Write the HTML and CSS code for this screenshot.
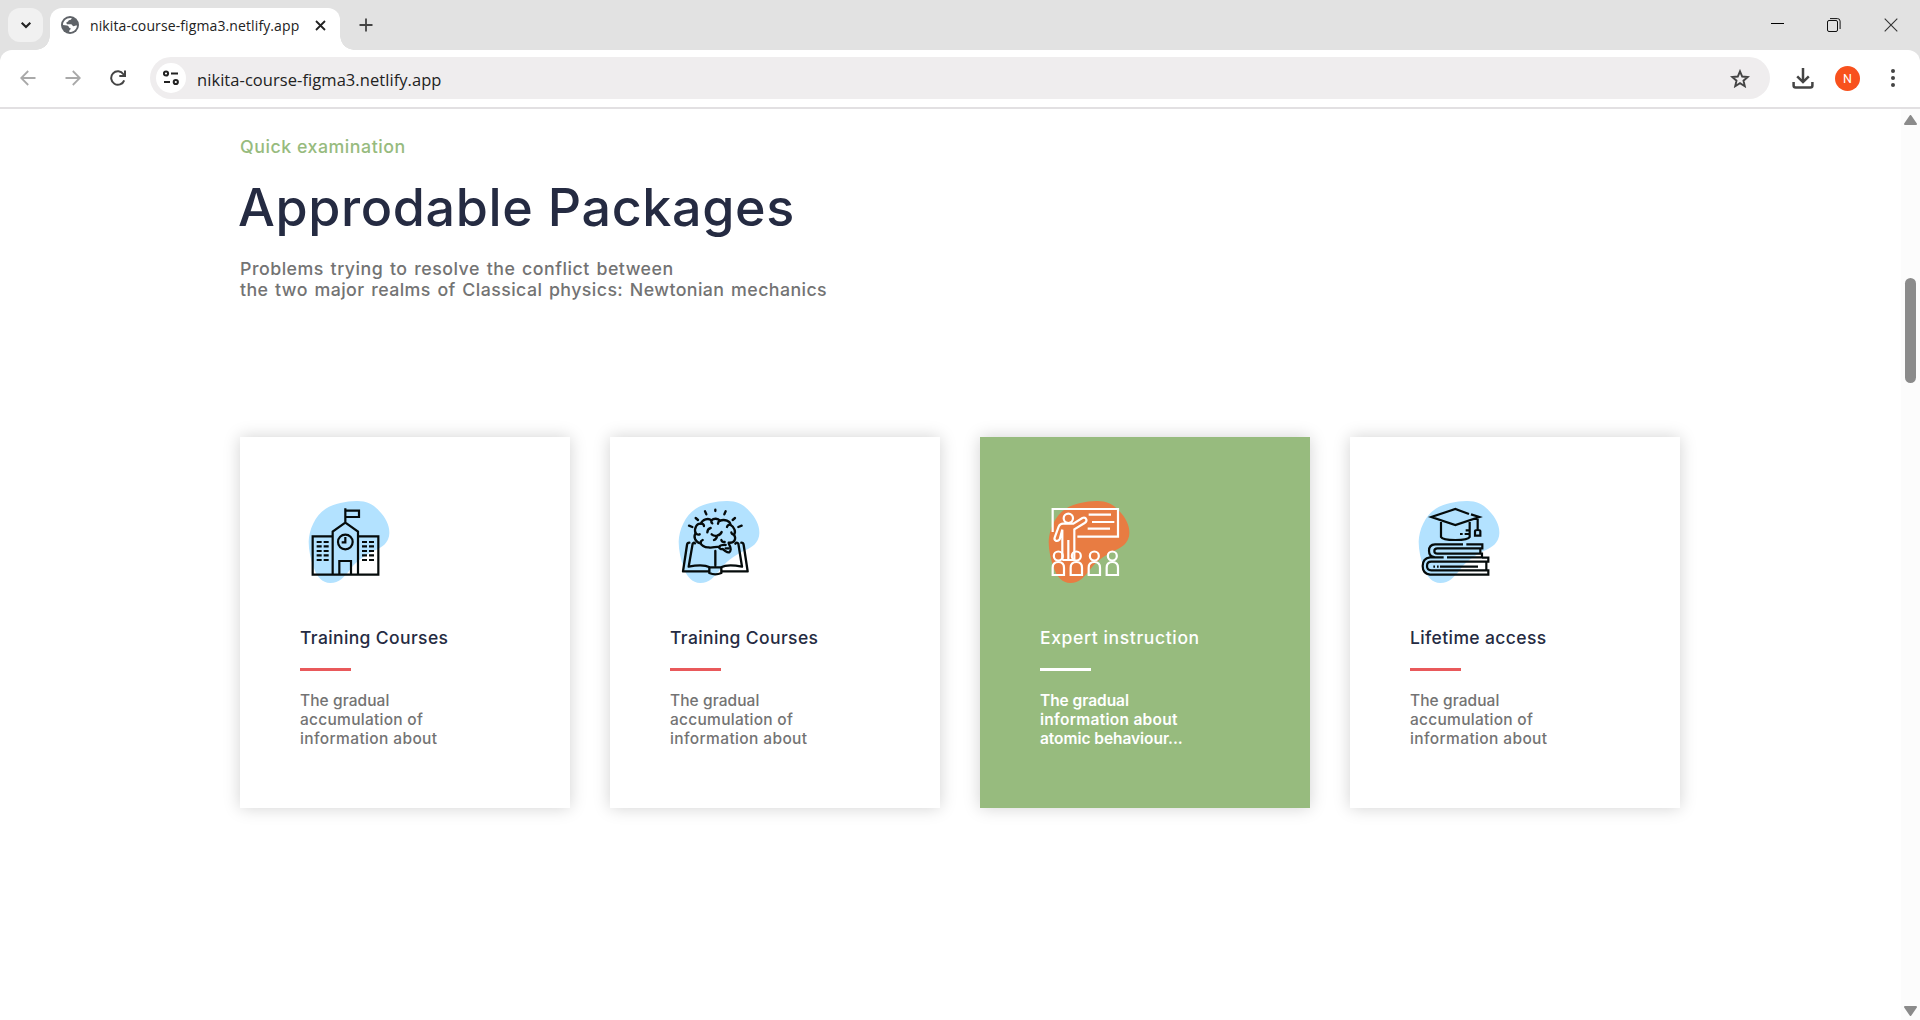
FILE: index.html
```
<!DOCTYPE html>
<html lang="en">
<head>
<meta charset="utf-8">
<title>nikita-course-figma3.netlify.app</title>
<link rel="stylesheet" href="styles.css">
</head>
<body>
<header class="browser">
  <div class="tabstrip">
    <div class="tab-search"><svg width="12" height="8" viewBox="0 0 12 8"><path d="M1.7 1.7 6 6l4.3-4.3" fill="none" stroke="#222" stroke-width="2.1"/></svg></div>
    <div class="tab">
      <svg class="globe" width="18" height="18" viewBox="0 0 18 18"><circle cx="9" cy="9" r="9" fill="#5f6368"/><path d="M10.7 2.1C10.4 3.8 9.500 4.200 7.800 4.300 7.300 5.400 6.800 6 5.400 6.200 5.500 7.600 5.600 8.300 6.800 8.300H9.800C11.500 8.300 11.200 10 12.400 10.200 13.600 10.300 14.600 9.300 16 9.500 15.600 13.500 12.500 16.200 8.300 16 8.200 15 8.300 14.200 9 13.800 10.200 13.200 9.800 11.700 8.200 11.700 7.600 10.500 7.400 9.800 6 9.600L2 9C2 5 5.500 1.500 10.700 2.100Z" fill="#fff"/></svg>
      <span class="tab-title">nikita-course-figma3.netlify.app</span>
      <svg width="11" height="11" viewBox="0 0 11 11"><path d="m1 1 9 9M10 1l-9 9" stroke="#222" stroke-width="1.800"/></svg>
    </div>
    <svg class="new-tab" width="14" height="14" viewBox="0 0 14 14"><path d="M7 .5v13M.5 7h13" stroke="#444" stroke-width="1.800"/></svg>
    <div class="window-controls">
      <svg width="13" height="13" viewBox="0 0 13 13"><path d="M0 5.500h13" stroke="#000"/></svg>
      <svg width="14" height="14" viewBox="0 0 14 14" fill="none" stroke="#111"><rect x=".5" y="2.500" width="10" height="11" rx="1.500"/><path d="M3 .6h7.500q2.600 0 2.600 2.600V11"/></svg>
      <svg width="14" height="14" viewBox="0 0 14 14"><path d="m.7.700 12.600 12.600M13.300.7.700 13.300" stroke="#333" stroke-width="1.100"/></svg>
    </div>
  </div>
  <div class="toolbar">
    <nav class="nav-buttons">
      <svg width="16" height="16" viewBox="0 0 16 16" fill="none" stroke="#a9a9a9" stroke-width="1.800"><path d="M15.500 8H1.700M8.200 1 1.200 8l7 7"/></svg>
      <svg width="16" height="16" viewBox="0 0 16 16" fill="none" stroke="#a9a9a9" stroke-width="1.800"><path d="M.5 8h13.800M7.800 1l7 7-7 7"/></svg>
      <svg width="16" height="16" viewBox="0 0 16 16" fill="none" stroke="#444" stroke-width="2"><path d="M14.200 10.300A6.700 6.700 0 1 1 13.400 4.200L15 6M15 .5V6H9.300"/></svg>
    </nav>
    <div class="omnibox">
      <span class="site-info"><svg width="16" height="16" viewBox="0 0 16 16" fill="none" stroke="#222" stroke-width="2"><circle cx="3" cy="3.500" r="2.100"/><path d="M8 3.500h7M1 12h6"/><circle cx="12.800" cy="12" r="2.100"/></svg></span>
      <span class="url">nikita-course-figma3.netlify.app</span>
      <svg class="star" width="20" height="19" viewBox="0 0 20 19"><path d="m10 2.300 2.200 5.200 5.600.500-4.300 3.700 1.300 5.500-4.800-3-4.800 3 1.300-5.500L2.200 8l5.600-.5Z" fill="none" stroke="#444" stroke-width="1.900"/></svg>
    </div>
    <svg class="download" width="22" height="21" viewBox="0 0 22 21" fill="none" stroke="#444" stroke-width="2.500"><path d="M11 0v13.500M5.200 8.300l5.800 5.800 5.800-5.800M1.600 14v3.500q0 2 2 2h14.800q2 0 2-2V14"/></svg>
    <span class="avatar">N</span>
    <svg class="menu" width="4" height="18" viewBox="0 0 4 18" fill="#444"><circle cx="2" cy="2" r="2"/><circle cx="2" cy="9" r="2"/><circle cx="2" cy="16" r="2"/></svg>
  </div>
</header>

<svg class="defs" width="0" height="0"><defs>
  <path id="blob" d="M200 63C228 62 250 72 268 92 288 112 300 136 299 160 298 182 286 197 265 207 235 220 205 238 183 266 165 290 148 309 122 309 98 309 80 290 72 262 63 238 57 210 57 185 58 150 75 108 108 86 135 70 168 64 200 63Z"/>
  <g id="person"><circle cx="86" cy="228" r="13.500"/><path d="M69 285v-22q0-17 17-17t17 17v22Z"/></g>
</defs></svg>

<div class="viewport">
  <main class="packages">
    <p class="eyebrow">Quick examination</p>
    <h1>Approdable Packages</h1>
    <p class="lead"><span class="lead-first">Problems trying to resolve the conflict between</span><br><span class="lead-second">the two major realms of Classical physics: Newtonian mechanics</span></p>
    <section class="cards">
      <article class="card">
        <svg class="card-icon" viewBox="31 51 300 270"><use href="#blob" class="blob"/>
          <g class="lines"><path d="M129 169H69v115h197V169h-61M129 284V155l38-27 38 27v129M167 130V85M167 92h41v19h-41M149 284v-41h35v41"/><circle cx="167" cy="186" r="22"/><path d="M167 171v16h-11"/>
          <path class="windows" d="M81 186h36M81 199h36M81 213h36M81 226h36M81 240h36M217 186h36M217 199h36M217 213h36M217 226h36M217 240h36"/></g></svg>
        <h2>Training Courses</h2><hr>
        <p>The gradual<br><span class="mid">accumulation of</span><br><span class="wide">information about</span></p>
      </article>
      <article class="card">
        <svg class="card-icon" viewBox="31 51 300 270"><use href="#blob" class="blob"/>
          <g class="lines round"><path d="M147 202C134 203 124 194 123 190 107 188 100 170 108 160 102 144 112 129 124 131 128 118 146 113 155 121 163 114 175 115 181 122 195 117 212 123 212 134 225 141 229 157 223 164 231 177 224 190 207 188 206 193 214 200 213 208 212 218 207 220 198 214L189 207C184 209 179 205 178 201 169 198 158 206 147 202Z"/>
          <path d="M108 160q5 6 12 3M123 190q0-8 6-10M124 131q8 0 9 7M143 157q1-11 10-13M155 121q-1 6 3 9M181 122q-6 3-6 9M212 134q-8 0-10 7M223 164q-7-1-8-7M156 163q7 6 16 4 11-3 14-11M172 168q-1 9-9 12M185 180q2 7 10 6M178 201q4-7 20-6M198 205h9"/>
          <path d="M167 89v4M136 94l4 9M198 94l-4 9M108 114l7 6M226 114l-7 6M88 137l10 4M246 137l-10 4M167 213v43M106 190q-3-4-7 1L87 260q44-9 63 2h34q19-11 63-2L236 191q-4-6-9 0M89 188q-6 0-7 7L70 274h79M245 188q6 0 7 7l12 79h-79M149 263v16q18 8 36 0v-16"/></g></svg>
        <h2>Training Courses</h2><hr>
        <p>The gradual<br><span class="mid">accumulation of</span><br><span class="wide">information about</span></p>
      </article>
      <article class="card featured">
        <svg class="card-icon" viewBox="31 51 300 270"><use href="#blob" class="blob"/>
          <g class="lines"><path d="M69 156V87h196v83H143M177 104h67M187 126h67M174 146h67"/><circle cx="116" cy="115" r="14"/><path d="M98 240v-91l-8 29q-5 7-12 4-5-3-3-9l12-33q4-9 13-9h31l27-17q9-3 12 4 2 7-5 11l-31 19v91M116 180v58M98 240h35"/>
          <use href="#person"/><use href="#person" x="54"/><use href="#person" x="108"/><use href="#person" x="162"/></g></svg>
        <h2>Expert instruction</h2><hr>
        <p>The gradual<br><span class="mid">information about</span><br>atomic behaviour...</p>
      </article>
      <article class="card">
        <svg class="card-icon" viewBox="31 51 300 270"><use href="#blob" class="blob"/>
          <g class="lines"><path d="M208 102 167 87 95 111l72 24 72-24-25-8M124 122v49q4 9 43 9t43-9v-49M210 151h-12M210 162h-15M181 162h8M234 112v38M226 167v-13q0-4 8-4t8 4v13Z"/>
          <path d="M190 193h-84q-18 1-18 19t17 19M200 193h48v12H113q-9 0-9 8t9 8h134v11H142M242 205v16M132 232H91q-22 3-22 26t22 26h175v-13H95q-13 0-13-13t13-13h171v-12h-19M260 245v26M101 260h5M112 260h5M121 260h114"/></g></svg>
        <h2>Lifetime access</h2><hr>
        <p>The gradual<br><span class="mid">accumulation of</span><br><span class="wide">information about</span></p>
      </article>
    </section>
  </main>
  <div class="scrollbar">
    <svg width="13" height="10" viewBox="0 0 13 10"><path d="M6.500 1 12 9H1Z" fill="#8b8b8b" stroke="#8b8b8b" stroke-linejoin="round" stroke-width="2"/></svg>
    <div class="track"><div class="thumb"></div></div>
    <svg width="13" height="10" viewBox="0 0 13 10"><path d="M6.500 9 12 1H1Z" fill="#8b8b8b" stroke="#8b8b8b" stroke-linejoin="round" stroke-width="2"/></svg>
  </div>
</div>
</body>
</html>
```
FILE: styles.css
```
* { box-sizing: border-box; }
body { margin: 0; height: 1020px; overflow: hidden; display: flex; flex-direction: column; background: #fff; font-family: Inter, sans-serif; }
svg { display: block; flex: none; }
h1, h2, p, hr { margin: 0; }
.defs { position: absolute; }

.browser { height: 109px; flex: none; background: #e2e2e2; font-family: "Open Sans", "Noto Sans", sans-serif; color: #222; }
.tabstrip { height: 50px; display: flex; padding: 8px 22px 0 8px; }
.tab-search { width: 35px; height: 34px; border-radius: 12px; background: #f1f1f1; display: flex; align-items: center; justify-content: center; }
.tab { position: relative; width: 290px; height: 42px; margin-left: 7px; padding: 0 14px 8px 11px; display: flex; align-items: center; background: #fff; border-radius: 12px 12px 0 0; }
.tab::before, .tab::after { content: ""; position: absolute; bottom: 0; width: 14px; height: 14px; }
.tab::before { left: -14px; background: radial-gradient(circle at 0 0, transparent 13.5px, #fff 14px); }
.tab::after { right: -14px; background: radial-gradient(circle at 100% 0, transparent 13.5px, #fff 14px); }
.tab-title { margin-left: 11px; margin-right: auto; font-size: 14px; letter-spacing: .11px; white-space: nowrap; }
.new-tab { margin: 10px 0 0 19px; }
.window-controls { display: flex; margin: 10px 0 0 auto; gap: 43px; }
.toolbar { height: 59px; display: flex; align-items: center; padding: 0 25px 1px 20px; background: #fff; border-radius: 12px 12px 0 0; border-bottom: 2px solid #e2e0e2; }
.nav-buttons { display: flex; gap: 29px; }
.omnibox { width: 1620px; height: 42px; margin-left: 24px; padding: 0 20px 0 6px; display: flex; align-items: center; background: #efedee; border-radius: 21px; }
.site-info { width: 30px; height: 30px; border-radius: 50%; background: #fff; display: flex; align-items: center; justify-content: center; }
.url { margin: 2px auto 0 11px; font-size: 16.500px; letter-spacing: .06px; }
.download { margin-left: 22px; }
.avatar { width: 25px; height: 25px; margin-left: 21px; border-radius: 50%; background: #f8511d; color: #fff; font: 12.500px/25px Roboto, sans-serif; text-align: center; }
.menu { margin-left: auto; }

.viewport { flex: 1; display: flex; min-height: 0; }
.packages { width: 1901px; padding: 27px 221px 0 240px; }
.eyebrow { font-size: 17.800px; line-height: 22px; font-weight: 500; letter-spacing: .52px; color: #97bb7e; }
h1 { margin: 19px 0 0 -2px; font-size: 52px; line-height: 62px; font-weight: 500; letter-spacing: .62px; color: #252b42; }
.lead { margin-top: 19px; font-size: 17.800px; line-height: 21px; font-weight: 500; word-spacing: 1.500px; color: #737373; }
.lead-first { letter-spacing: .49px; }
.lead-second { letter-spacing: .41px; }
.cards { margin-top: 137px; display: grid; grid-template-columns: repeat(4, 330px); gap: 40px; }
.card { height: 371px; padding: 60px; background: #fff; box-shadow: 0 0 16px rgba(0,0,0,.18); color: #737373; font-weight: 500; }
.card-icon { width: 100px; height: 90px; }
.blob { fill: #b3e2ff; }
.lines { fill: none; stroke: #050b0b; stroke-width: 6.600; }
.round { stroke-width: 7; stroke-linecap: round; stroke-linejoin: round; }
.windows { stroke-dasharray: 15 6 15 100; }
.card h2 { margin-top: 40px; font-size: 17.500px; line-height: 22px; font-weight: 500; letter-spacing: .38px; color: #252b42; }
.card hr { width: 51px; height: 3px; margin-top: 19px; border: 0; background: #e9595b; }
.card p { margin-top: 20px; font-size: 15.500px; line-height: 19px; letter-spacing: .07px; white-space: nowrap; }
.mid { letter-spacing: .27px; }
.wide { letter-spacing: .37px; }
.featured { background: #97bb7e; color: #fff; }
.card.featured h2 { color: #fff; letter-spacing: .64px; }
.card.featured hr { background: #fff; }
.card.featured p { font-weight: 600; letter-spacing: -.05px; }
.featured .blob { fill: #e87c42; }
.featured .lines { stroke: #fff; }

.scrollbar { width: 19px; padding: 6px 0 4px 3px; display: flex; flex-direction: column; background: #fcfcfc; }
.track { flex: 1; padding: 153px 0 0 1px; }
.thumb { width: 11px; height: 105px; border-radius: 6px; background: #8b8b8b; }
```
